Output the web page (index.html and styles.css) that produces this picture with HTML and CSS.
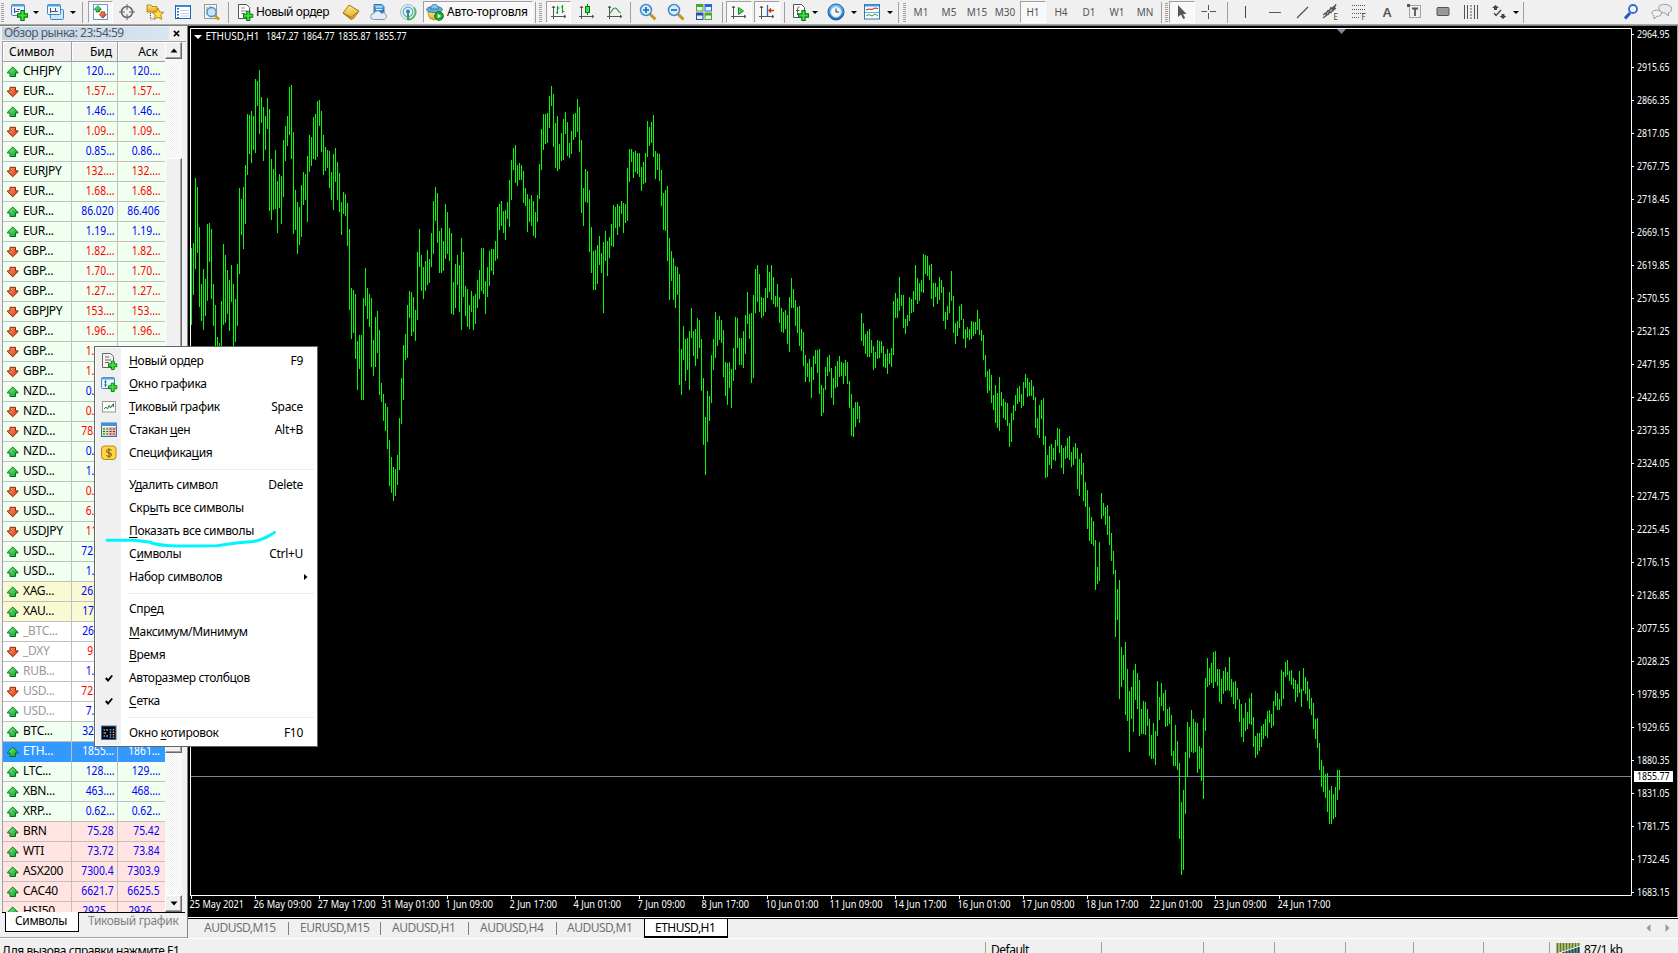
FILE: index.html
```html
<!DOCTYPE html>
<html lang="ru">
<head>
<meta charset="utf-8">
<title>ETHUSD,H1</title>
<link rel="stylesheet" href="styles.css">
</head>
<body>
<svg class="defs" aria-hidden="true">
  <defs>
    <linearGradient id="gUp" x1="0" y1="0" x2="1" y2="1"><stop offset="0" stop-color="#7df58a"/><stop offset="1" stop-color="#0a9a22"/></linearGradient>
    <linearGradient id="gDn" x1="0" y1="0" x2="1" y2="1"><stop offset="0" stop-color="#ffa070"/><stop offset="1" stop-color="#d83008"/></linearGradient>
    <linearGradient id="gGold" x1="0" y1="0" x2="0" y2="1"><stop offset="0" stop-color="#ffe98a"/><stop offset="1" stop-color="#e0a417"/></linearGradient>
    <linearGradient id="gBlue" x1="0" y1="0" x2="0" y2="1"><stop offset="0" stop-color="#7cc4f4"/><stop offset="1" stop-color="#1b62b4"/></linearGradient>
    <symbol id="up" viewBox="0 0 12 12"><path d="M5.700 1 11 6.300V7H8.500v3.500H3V7H.5V6.300z" fill="url(#gUp)" stroke="#0b6e1a"/></symbol>
    <symbol id="dn" viewBox="0 0 12 12"><path d="M5.700 10.800.5 5.500V4.800H3V1.300h5.500v3.500H11v.7z" fill="url(#gDn)" stroke="#8f2408"/></symbol>
    <symbol id="plus" viewBox="0 0 10 10"><path d="M3.500.5h3v3h3v3h-3v3h-3v-3h-3v-3h3z" fill="#3fe03f" stroke="#067a12"/></symbol>
    <symbol id="axes" viewBox="0 0 18 18"><path d="M3.500 3v13M1 13.500h15M2 5l1.500-2L5 5M14 12l2 1.500-2 1.500" fill="none" stroke="#555"/></symbol>
  </defs>
</svg>

<header class="toolbar">
  <i class="grip"></i>
  <span class="btn w23"><svg class="ic" viewBox="0 0 18 18"><rect x="1.500" y="1.500" width="13" height="11" rx="1" fill="#eef6fd" stroke="#3d86c6"/><path d="M2 2.500h12" stroke="#5aa0dc" stroke-width="2"/><path d="M4.500 5v5M4 8.500h5M7 6.500h3" stroke="#557"/><use href="#plus" x="7" y="7" width="11" height="11"/></svg></span>
  <span class="btn w11"><i class="caret"></i></span>
  <span class="btn"><svg class="ic" viewBox="0 0 18 18"><rect x="4.500" y="6.500" width="13" height="10" rx="1" fill="#cfe6fa" stroke="#3d86c6"/><rect x="1.500" y="1.500" width="13" height="10" rx="1" fill="#eef6fd" stroke="#3d86c6"/><path d="M2 2.500h12" stroke="#5aa0dc" stroke-width="2"/><path d="M4.500 5v5M4 8.500h8M9.500 5v4" stroke="#557"/></svg></span>
  <span class="btn w8"><i class="caret"></i></span>
  <i class="sep w11"></i>
  <span class="btn w25 on"><svg class="ic" viewBox="0 0 18 18"><rect x="1.500" y="1.500" width="14" height="15" fill="#fff" stroke="#5e9fdb"/><use href="#up" x="2" y="2" width="8" height="8"/><use href="#dn" x="7" y="8" width="8" height="8"/></svg></span>
  <span class="btn"><svg class="ic" viewBox="0 0 18 18"><g fill="none" stroke="#666"><circle cx="9" cy="9" r="5.500" stroke-width="1.500"/><path d="M9 1v6M9 11v6M1 9h6M11 9h6"/></g></svg></span>
  <span class="btn"><svg class="ic" viewBox="0 0 18 18"><path d="M1 2h4l1 1.500h5V9H1z" fill="url(#gGold)" stroke="#b98c1c"/><path d="M4.500 10v6h4" fill="none" stroke="#444" stroke-dasharray="1 1"/><path d="m12 5 1.700 4 4.100.3-3.100 2.800 1 4.300L12 14.200l-3.700 2.200 1-4.300-3.100-2.800 4.100-.3z" fill="#ffd94a" stroke="#b98c1c"/></svg></span>
  <span class="btn"><svg class="ic" viewBox="0 0 18 18"><rect x="1.500" y="2.500" width="15" height="13" fill="#fff" stroke="#1f66b0"/><path d="M2 3h14" stroke="#3a87d0" stroke-width="2"/><path d="M4 5v10" stroke="#2b6fbd" stroke-width="2" stroke-dasharray="1.500 1.500"/><path d="M7 7.500h8M7 10.500h8M7 13h8" stroke="#b8cde4"/></svg></span>
  <span class="btn"><svg class="ic" viewBox="0 0 18 18"><rect x="2.500" y="1.500" width="12" height="14" fill="#f4f4f0" stroke="#9a9a90"/><path d="M5 4v8M8 3v5M11 4v3" stroke="#999"/><circle cx="9.500" cy="9" r="4.500" fill="#bfe0f8" fill-opacity=".85" stroke="#4b8fc8" stroke-width="1.300"/><path d="m13 12.500 4 4" stroke="#c8961d" stroke-width="2.500"/></svg></span>
  <i class="sep w7"></i>
  <span class="btn wide w104"><svg class="ic" viewBox="0 0 18 18"><path d="M2.500 1.500h8l3 3v11h-11z" fill="#fff" stroke="#555"/><path d="M5 5h4M5 8h6M5 10.500h4" stroke="#888"/><use href="#plus" x="7" y="7.500" width="10.500" height="10.500"/></svg><b class="t-order">Новый ордер</b></span>
  <span class="btn"><svg class="ic" viewBox="0 0 18 18"><path d="M1 10 7 2l10 6-5 7-3 1.500z" fill="url(#gGold)" stroke="#a87412"/><path d="M1 10 9 14.500l8-6.500" fill="none" stroke="#a87412"/></svg></span>
  <span class="btn"><svg class="ic" viewBox="0 0 18 18"><path d="M4 1.500h8l2 2V10H4z" fill="url(#gBlue)" stroke="#2f79c0"/><path d="M6 4h6M6 6.500h6" stroke="#e5f3ff"/><path d="M3.500 16.500a3 3 0 0 1 .3-6 4 4 0 0 1 7.400-.3 3.200 3.200 0 0 1 3.300 6.300z" fill="#e6ecf6" stroke="#7f96ba"/></svg></span>
  <span class="btn w30"><svg class="ic" viewBox="0 0 18 18"><circle cx="9" cy="9" r="7.500" fill="#dff0ee" stroke="#9cc4c8"/><circle cx="9" cy="9" r="4.800" fill="none" stroke="#6b9fd0" stroke-width="1.200"/><path d="M9 16.500A7.500 7.500 0 0 0 15 4.500" fill="none" stroke="#5cb46a" stroke-width="2"/><circle cx="9" cy="8.500" r="2" fill="#3579c4"/><path d="M9 10v7" stroke="#37a045" stroke-width="2"/></svg></span>
  <span class="btn wide on w110 auto"><svg class="ic" viewBox="0 0 18 18"><path d="M2 9h12l-1.500 6L8 17l-4.500-2z" fill="url(#gGold)" stroke="#c29322"/><ellipse cx="8.500" cy="6.500" rx="8" ry="3" fill="#66aede" stroke="#3878aa"/><path d="M4.500 6C4.500 0 12.500 0 12.500 6z" fill="#8cc8ee" stroke="#3878aa"/><circle cx="13" cy="13" r="4.300" fill="#1ea82c" stroke="#0b7418"/><path d="m11.700 10.700 3.500 2.300-3.500 2.300z" fill="#fff"/></svg><b class="t-auto">Авто-торговля</b></span>
  <i class="sep w5"></i>
  <i class="grip w8"></i>
  <span class="btn w25 on"><svg class="ic" viewBox="0 0 18 18"><use href="#axes"/><path d="M7.500 3v8M6 9.500h1.500M7.500 5h2M12.500 2v8M11 4h1.500M12.500 8.500h2" stroke="#169a26" stroke-width="1.200"/></svg></span>
  <span class="btn w32"><svg class="ic" viewBox="0 0 18 18"><use href="#axes"/><path d="M9.500 1v11" stroke="#087a16"/><rect x="7.500" y="3.500" width="4" height="6" fill="#3fe04a" stroke="#087a16"/></svg></span>
  <span class="btn w24"><svg class="ic" viewBox="0 0 18 18"><use href="#axes"/><path d="M3 11c3-1 3-6 6-6s2 4 6 5" fill="none" stroke="#2e9a3c" stroke-width="1.200"/></svg></span>
  <i class="sep w7"></i>
  <span class="btn"><svg class="ic" viewBox="0 0 18 18"><path d="m11 11 5.500 5.500" stroke="#c8961d" stroke-width="3"/><circle cx="7" cy="7" r="5.500" fill="#d5edfc" stroke="#3d8cc8" stroke-width="1.500"/><path d="M4 7h6M7 4v6" stroke="#1c68a8" stroke-width="1.600"/></svg></span>
  <span class="btn"><svg class="ic" viewBox="0 0 18 18"><path d="m11 11 5.500 5.500" stroke="#c8961d" stroke-width="3"/><circle cx="7" cy="7" r="5.500" fill="#d5edfc" stroke="#3d8cc8" stroke-width="1.500"/><path d="M4 7h6" stroke="#1c68a8" stroke-width="1.600"/></svg></span>
  <span class="btn"><svg class="ic" viewBox="0 0 18 18"><path d="M1 1h7.500v7.500H1zM9.500 9.500H17V17H9.500z" fill="#4aa81c"/><path d="M9.500 1H17v7.500H9.500z" fill="#2866d8"/><path d="M1 9.500h7.500V17H1z" fill="#2450a8"/><path d="M2 4h5.500v3.500H2zM10.500 4H16v3.500h-5.500zM2 12.500h5.500V16H2zM10.500 12.500H16V16h-5.500z" fill="#e8f2ff"/></svg></span>
  <i class="sep w8"></i>
  <span class="btn w26 on"><svg class="ic" viewBox="0 0 18 18"><use href="#axes"/><path d="M8.500 4.500v7l5-3.500z" fill="#4cd857" stroke="#0f8a1e"/></svg></span>
  <span class="btn w26 on ml2"><svg class="ic" viewBox="0 0 18 18"><use href="#axes"/><path d="M9.500 2v11" stroke="#2b6ab0" stroke-width="1.300"/><path d="M16 7.500h-5M13 5.500l-2 2 2 2" fill="none" stroke="#c03a10" stroke-width="1.400"/></svg></span>
  <i class="sep w8"></i>
  <span class="btn w23"><svg class="ic" viewBox="0 0 18 18"><path d="M2.500 1.500h8l3 3v10h-11z" fill="#fff" stroke="#555"/><path d="M8.500 4C6.500 3.500 6.500 5 6.500 12M5 7.500h3.500" fill="none" stroke="#555"/><use href="#plus" x="7" y="7" width="11" height="11"/></svg></span>
  <span class="btn w8"><i class="caret"></i></span>
  <span class="btn ml3"><svg class="ic" viewBox="0 0 18 18"><circle cx="9" cy="9" r="8" fill="url(#gBlue)" stroke="#1b5ca4"/><circle cx="9" cy="9" r="5.300" fill="#eef6ff" stroke="#b8d4ee"/><path d="M9 5.500V9h3" fill="none" stroke="#333"/></svg></span>
  <span class="btn w8"><i class="caret"></i></span>
  <span class="btn"><svg class="ic" viewBox="0 0 18 18"><rect x="1.500" y="1.500" width="15" height="14.500" fill="#fff" stroke="#2d78bc"/><path d="M2 2.500h14" stroke="#4a98dc" stroke-width="2"/><path d="M2 9.500h14" stroke="#79a9d4"/><path d="m3 7 3-1 3 .5 3-1.500 3 .5" fill="none" stroke="#9a2a14"/><path d="m3 13 3-1.500 3 1.500 3-2 3 2" fill="none" stroke="#2e9a3c"/></svg></span>
  <span class="btn w8"><i class="caret"></i></span>
  <i class="sep w8"></i>
  <i class="grip w5"></i>
  <span class="btn tf">M1</span><span class="btn tf">M5</span><span class="btn tf">M15</span><span class="btn tf">M30</span><span class="btn tf on">H1</span><span class="btn tf">H4</span><span class="btn tf">D1</span><span class="btn tf">W1</span><span class="btn tf">MN</span>
  <i class="sep w5"></i>
  <i class="grip w5"></i>
  <span class="btn w26 on"><svg class="ic" viewBox="0 0 18 18"><path d="M5 2v12l3-2.500 2.200 4.500 2-1L10 11h3.500z" fill="#555"/></svg></span>
  <span class="btn"><svg class="ic" viewBox="0 0 18 18"><path d="M8.500 2v5M8.500 10v6M1.500 8.500H7M10 8.500h6" stroke="#555"/></svg></span>
  <i class="sep w8"></i>
  <span class="btn w30"><svg class="ic" viewBox="0 0 18 18"><path d="M8.500 3v12" stroke="#444"/></svg></span>
  <span class="btn"><svg class="ic" viewBox="0 0 18 18"><path d="M3 9.500h12" stroke="#555"/></svg></span>
  <span class="btn"><svg class="ic" viewBox="0 0 18 18"><path d="M3 15 14 4" stroke="#555" stroke-width="1.200"/></svg></span>
  <span class="btn"><svg class="ic tool" viewBox="0 0 18 18"><path d="M1 12 14 2M1 15 14 5M3 14 6 7M6 12 9 4M9 10l3-7M11 8l3-7" stroke="#555" stroke-width="1.200"/><text x="11.500" y="17">E</text></svg></span>
  <span class="btn"><svg class="ic tool" viewBox="0 0 18 18"><path d="M2 2.500h13M2 6.500h13M2 10.500h13M2 14.500h8" stroke="#555" stroke-dasharray="1 1"/><text x="11.500" y="17">F</text></svg></span>
  <span class="btn glyph">A</span>
  <span class="btn"><svg class="ic tool" viewBox="0 0 18 18"><rect x="3.500" y="2.500" width="11" height="12" fill="none" stroke="#555" stroke-dasharray="1 1"/><path d="M1 1h3v3H1z" fill="#555"/><path d="M6 5.500h6M9 5v8" stroke="#555" stroke-width="1.800"/></svg></span>
  <span class="btn"><svg class="ic" viewBox="0 0 18 18"><rect x="3" y="4.500" width="12" height="8" rx="1" fill="#999" stroke="#555"/></svg></span>
  <span class="btn"><svg class="ic" viewBox="0 0 18 18"><path d="M2.500 2v14M5.500 2v14M12.500 2v14M15.500 2v14" stroke="#555"/><path d="M9 2v14" stroke="#555" stroke-dasharray="2 1"/></svg></span>
  <span class="btn"><svg class="ic" viewBox="0 0 18 18"><path d="m5.500 2 3.500 3H7v2H4V5H2zM13 16l-3.500-3h2v-2h3v2h2z" fill="#444"/><path d="m4 10 2 2.500 5-5.500" fill="none" stroke="#444" stroke-width="1.300"/></svg></span>
  <span class="btn w5"><i class="caret"></i></span>
  <i class="sep w11"></i>
  <span class="fill"></span>
  <span class="btn w30"><svg class="ic" viewBox="0 0 18 18"><path d="m3 15.500 5-5.500" stroke="#1f56c8" stroke-width="3"/><circle cx="11" cy="6" r="4" fill="#f2f7ff" stroke="#2f69d8" stroke-width="1.800"/></svg></span>
  <span class="btn w32"><svg class="chat" viewBox="0 0 22 18"><path d="M8 3.500C9 .5 20.500.5 20.500 5.500c0 3-1.500 4-3 4.300L17.500 13l-3.500-3C9 10 7.500 7 8 3.500z" fill="#e9e9ef" stroke="#999"/><path d="M1 10c0-3.800 9.500-3.800 9.500 0 0 2.700-2.500 3.300-4.500 3.300L3 16v-3.500C1.700 12 1 11 1 10z" fill="#f3f3f7" stroke="#999"/></svg></span>
</header>

<main class="work">
  <aside class="watch">
    <div class="caption"><span class="caption-text"><em>Обзор рынка: 23:54:59</em></span><svg class="close" viewBox="0 0 8 8"><path d="m1 1 6 6M7 1 1 7" stroke="#000" stroke-width="1.700"/></svg></div>
    <div class="grid">
      <div class="table">
        <div class="row head"><span class="c-sym">Символ</span><span class="c-num">Бид</span><span class="c-num">Аск</span></div>
        <div class="rows" id="rows"></div>
      </div>
      <div class="scroll">
        <i class="sb"><svg viewBox="0 0 8 5"><path d="M4 .5 7.500 4.500H.5z"/></svg></i>
        <i class="track"></i><i class="thumb"></i><i class="track low"></i>
        <i class="sb"><svg viewBox="0 0 8 5"><path d="M4 4.500.5.5h7z"/></svg></i>
      </div>
    </div>
    <div class="ptabs"><span class="ptab active"><em>Символы</em></span><span class="ptab"><em>Тиковый график</em></span></div>
  </aside>

  <section class="mdi">
    <svg class="chart" id="chart" width="1490" height="891" viewBox="188 26 1490 891"></svg>
    <nav class="tabs">
      <span class="tab t1">AUDUSD,M15</span><span class="tab t2">EURUSD,M15</span><span class="tab t3">AUDUSD,H1</span><span class="tab t4">AUDUSD,H4</span><span class="tab t5">AUDUSD,M1</span><span class="tab active">ETHUSD,H1</span>
      <span class="fill"></span>
      <svg class="nav" viewBox="0 0 24 8"><path d="M4.500 0v8L.5 4zM19.500 0v8l4-4z" fill="#999"/></svg>
    </nav>
  </section>
</main>

<footer class="status">
  <span class="s-help"><em>Для вызова справки нажмите F1</em></span><span class="s-cell s1"><em>Default</em></span><span class="s-cell s2"></span><span class="s-cell s3"></span><span class="s-cell s3"></span><span class="s-cell s4"></span><span class="s-cell s5"></span><span class="s-cell s6"></span>
  <span class="s-cell s7"><svg class="traffic" viewBox="0 0 24 14"><path d="M1.500 0v14M4.500 0v14M7.500 0v14M10.500 0v14M13.500 0v14M16.500 0v14M19.500 0v14M22.500 0v14" stroke="#5c7a10" stroke-width="2"/><path d="M1.500 11v3M4.500 10v4M7.500 9v5M10.500 8v6M13.500 7v7M16.500 6v8M19.500 5v9M22.500 4v10" stroke="#0c4a70" stroke-width="2"/><path d="M0 11 24 3" stroke="#f0f0f0" stroke-width="1"/></svg><em>87/1 kb</em></span>
</footer>

<div class="menu">
  <div class="mi"><i class="mic"><svg class="ic" viewBox="0 0 18 18"><path d="M2.500 1.500h8l3 3v11h-11z" fill="#f4f4f4" stroke="#666"/><path d="M5 5h4M5 8h6M5 10.500h4" stroke="#666"/><use href="#plus" x="8" y="8.500" width="9.500" height="9.500"/></svg></i><em><u>Н</u>овый ордер</em><kbd>F9</kbd></div>
  <div class="mi"><i class="mic"><svg class="ic" viewBox="0 0 18 18"><rect x="1.500" y="2.500" width="13" height="11" rx="1" fill="#eef6fd" stroke="#3d86c6"/><path d="M2 3.500h12" stroke="#5aa0dc" stroke-width="2"/><path d="M5.500 5v7M4 7h3M4 10h3" stroke="#47a"/><use href="#plus" x="8" y="7.500" width="9.500" height="9.500"/></svg></i><em><u>О</u>кно графика</em></div>
  <div class="mi"><i class="mic"><svg class="ic" viewBox="0 0 18 18"><rect x="2.500" y="3.500" width="13" height="10.500" fill="#fff" stroke="#999"/><path d="m4 11 2-2 1.500 2L9 7.500l1.500 2.500 2-3.500L13.500 9V5.500" fill="none" stroke="#1a8030"/></svg></i><em><u>Т</u>иковый график</em><kbd>Space</kbd></div>
  <div class="mi"><i class="mic"><svg class="ic" viewBox="0 0 18 18"><rect x="1.500" y="2" width="15" height="13.500" fill="#fff" stroke="#2f74ba"/><path d="M1 3.500h16" stroke="#4a90d8" stroke-width="3"/><path d="M2 6h7v9H2z" fill="#d2efb0"/><path d="M9 6h7v9H9z" fill="#f5b4a8"/><path d="M3 8h12M3 10.500h12M3 13h12" stroke="#445" stroke-dasharray="2 1.300"/></svg></i><em>Стакан <u>ц</u>ен</em><kbd>Alt+B</kbd></div>
  <div class="mi"><i class="mic"><svg class="ic" viewBox="0 0 18 18"><rect x="1.500" y="2" width="14.500" height="13.500" rx="3" fill="#fbd54a" stroke="#b88a14"/><path d="M11.500 6.500C10.500 5 6.500 5 6.500 7.200c0 2 5 1.300 5 3.600 0 2.200-4 2.200-5.200.5M9 4v10" fill="none" stroke="#8a6408" stroke-width="1.100"/></svg></i><em>Специфика<u>ц</u>ия</em></div>
  <hr>
  <div class="mi"><i class="mic"></i><em>У<u>д</u>алить символ</em><kbd>Delete</kbd></div>
  <div class="mi"><i class="mic"></i><em>Скр<u>ы</u>ть все символы</em></div>
  <div class="mi"><i class="mic"></i><em><u>П</u>оказать все символы</em></div>
  <div class="mi"><i class="mic"></i><em>С<u>и</u>мволы</em><kbd>Ctrl+U</kbd></div>
  <div class="mi"><i class="mic"></i><em>Набор символов</em><svg class="sub" viewBox="0 0 4 6"><path d="M0 0v6l3.500-3z"/></svg></div>
  <hr>
  <div class="mi"><i class="mic"></i><em>Спр<u>е</u>д</em></div>
  <div class="mi"><i class="mic"></i><em><u>М</u>аксимум/Минимум</em></div>
  <div class="mi"><i class="mic"></i><em><u>В</u>ремя</em></div>
  <div class="mi"><i class="mic"><svg class="ck" viewBox="0 0 8 8"><path d="m.8 4 2.200 2.500L7.200 1.500" fill="none" stroke="#000" stroke-width="1.900"/></svg></i><em>Авто<u>р</u>азмер столбцов</em></div>
  <div class="mi"><i class="mic"><svg class="ck" viewBox="0 0 8 8"><path d="m.8 4 2.200 2.500L7.200 1.500" fill="none" stroke="#000" stroke-width="1.900"/></svg></i><em><u>С</u>етка</em></div>
  <hr>
  <div class="mi"><i class="mic"><svg class="ic" viewBox="0 0 18 18"><rect x="1.500" y="2" width="14.500" height="13.500" fill="#05060c" stroke="#2f74ba"/><path d="M3.500 6h1.500M6 6h2M3.500 9h2.500M3.500 12h1.500M6 12h2" stroke="#ddd"/><path d="M10.500 5v9" stroke="#6a9af0" stroke-width="1.500" stroke-dasharray="1.500 1"/><path d="M13.500 5v9" stroke="#f08a7a" stroke-width="1.500" stroke-dasharray="1.500 1"/></svg></i><em>Окно <u>к</u>отировок</em><kbd>F10</kbd></div>
</div>
<svg class="marker" viewBox="104 525 174 26"><path d="M107 540.300 134 540.300 149 542C156 545 162 545.500 176 546L217 545.700 236 543 253 541.500C262 540.500 267 537 274.500 532.500" fill="none" stroke="#00f6ff" stroke-width="3" stroke-linecap="round" stroke-linejoin="round"/></svg>
<script src="app.js"></script>
</body>
</html>
```
FILE: styles.css
```css
* { box-sizing: border-box; }
html, body { margin: 0; height: 953px; overflow: hidden; }
body {
  display: flex; flex-direction: column; width: 1678px;
  background: #f0f0f0; color: #000;
  font: 12px/14px "Noto Sans", "Open Sans", sans-serif;
}
em, i, b { font-style: normal; font-weight: normal; }
em, b, .tf, kbd { white-space: nowrap; }
.defs { position: absolute; width: 0; height: 0; }
.fill { flex: 1; }

/* toolbar */
.toolbar { display: flex; align-items: center; flex: none; height: 26px; padding-bottom: 1px; border-bottom: 1px solid #808080; box-shadow: inset 0 -1px 0 #a8a8a8; }
.btn { display: flex; align-items: center; justify-content: center; flex: none; width: 28px; height: 22px; }
.on { border: 1px solid; border-color: #a0a0a0 #fff #fff #a0a0a0; background: #f8f8f8; }
.grip { flex: none; width: 7px; height: 19px; background: repeating-linear-gradient(#a0a0a0 0 1px, #f0f0f0 1px 2px) 1px 0 / 3px 100% no-repeat; }
.sep { flex: none; height: 21px; background: linear-gradient(#a0a0a0, #a0a0a0) 50% 0 / 1px 100% no-repeat; }
.w5 { width: 5px; } .w7 { width: 7px; } .w8 { width: 8px; } .w11 { width: 11px; }
.w23 { width: 23px; } .w24 { width: 24px; } .w25 { width: 25px; } .w26 { width: 26px; } .w30 { width: 30px; } .w32 { width: 32px; }
.w104 { width: 105px; } .w110 { width: 110px; }
.ml2 { margin-left: 2px; } .ml3 { margin-left: 3px; }
.wide { justify-content: flex-start; padding-left: 4px; }
.auto { padding-left: 2px; }
.ic { display: block; flex: none; width: 18px; height: 18px; }
.chat { width: 22px; height: 18px; }
.caret { flex: none; width: 0; height: 0; border: 3px solid transparent; border-top: 3px solid #000; border-bottom: 0; }
.t-order { margin-left: 2px; letter-spacing: -.45px; }
.t-auto { margin-left: 3px; letter-spacing: -.2px; }
.tf { color: #555; font-size: 10px; }
.tf.on { width: 26px; margin: 0 1px; }
.tool { overflow: visible; }
.tool text { font: 8px "Noto Sans", sans-serif; fill: #444; }
.glyph { color: #555; font-weight: 600; font-size: 13px; }

/* market watch */
.work { display: flex; flex: none; height: 912px; }
.watch { display: flex; flex-direction: column; flex: none; width: 188px; height: 912px; padding: 1px 0 0 2px; border-right: 1px solid #808080; border-bottom: 1px solid #a0a0a0; }
.caption { display: flex; align-items: center; flex: none; height: 13px; }
.caption-text { width: 167px; height: 13px; padding-left: 2px; background: linear-gradient(90deg, #c3d3e2, #d8e5f3); color: #4c5864; line-height: 12px; }
.caption-text em { letter-spacing: -.5px; }
.close { width: 7px; height: 7px; margin-left: 4px; }
.grid { display: flex; flex: none; height: 871px; margin-top: 1px; width: 184px; border-top: 1px solid #a0a0a0; }
.table { width: 163px; border-left: 1px solid #a0a0a0; overflow: hidden; }
.row { display: grid; grid-template-columns: 69px 46px 47px; height: 20px; }
.row > span { display: flex; align-items: center; overflow: hidden; border-bottom: 1px solid #c0c0c0; border-right: 1px solid #c0c0c0; }
.rows .row > span { padding-bottom: 2px; }
.row > span:last-child { border-right: 0; padding-right: 5px; }
.head > span { border-color: #a0a0a0; box-shadow: inset 1px 1px 0 #fff; }
.head .c-sym { padding-left: 6px; }
.c-num { justify-content: flex-end; padding-right: 3px; }
.head .c-num { padding-right: 5px; }
.row.head > span:last-child { padding-right: 7px; }
.rows { height: 851px; overflow: hidden; }
.c-sym .ar { flex: none; width: 12px; height: 12px; margin: 2px 4px 0 4px; }
.rows .c-sym em { letter-spacing: -.3px; }
.rows .c-num em { transform: scaleX(.86); transform-origin: right; }
.up .c-num { color: #00f; } .down .c-num { color: #f00; }
.mint { background: #f0fff0; } .gold { background: #fafad2; } .pink { background: #ffe4e1; } .plain { background: #fff; }
.plain .c-sym { color: #999; }
.sel { background: #3399ff; color: #fff; }
.rows .sel > span { border-bottom-color: #3399ff; }
.sel .c-num { color: #fff; }
.scroll { display: flex; flex-direction: column; width: 17px; height: 870px; }
.sb, .thumb { display: flex; align-items: center; justify-content: center; flex: none; border: 1px solid; border-color: #fff #696969 #696969 #fff; box-shadow: inset -1px -1px 0 #a0a0a0; background: #f0f0f0; }
.sb { height: 17px; }
.sb svg { width: 8px; height: 5px; }
.thumb { height: 595px; }
.track { flex: none; height: 99px; background: repeating-conic-gradient(#fff 0 25%, #f0f0f0 0 50%) 0 0 / 2px 2px; }
.track.low { flex: 1; height: auto; }
.ptabs { display: flex; flex: none; height: 20px; width: 183px; border-top: 1px solid #000; }
.ptab { height: 19px; padding: 1px 0 0 7px; color: #808080; }
.ptab em { letter-spacing: -.35px; }
.ptab.active { width: 74px; height: 20px; margin: -1px 2px 0 3px; padding: 2px 0 0 9px; border: 1px solid #000; border-top: 0; background: #fff; color: #000; }

/* chart */
.mdi { display: flex; flex-direction: column; flex: 1; height: 912px; }
.chart { display: block; flex: none; background: #000; }
.frame { fill: none; stroke: #fff; }
.bar { stroke: #00ff00; shape-rendering: crispEdges; }
.bid { stroke: #778899; shape-rendering: crispEdges; }
.chart text { font: 10px "Noto Sans", sans-serif; fill: #fff; }
.chart .dark { fill: #000; }
.tabs { display: flex; flex: none; height: 21px; padding: 0; border-top: 1px solid #fff; box-shadow: inset 0 1px 0 #000; }
.tab { display: flex; align-items: center; flex: none; height: 19px; padding-bottom: 2px; color: #707070; letter-spacing: -.5px; background: linear-gradient(#808080, #808080) 100% 50% / 1px 13px no-repeat; }
.t1 { width: 101px; padding-left: 16px; } .t2 { width: 92px; padding-left: 11px; } .t3 { width: 88px; padding-left: 11px; } .t4 { width: 88px; padding-left: 11px; } .t5 { width: 87px; padding-left: 10px; background: none; }
.tab { margin-top: 1px; }
.tab.active { width: 84px; height: 19px; padding: 0 0 0 10px; border: 1px solid #000; border-top: 0; border-bottom-width: 2px; background: #fff; color: #000; }
.nav { width: 24px; height: 8px; margin: 6px 8px 0 0; }

/* status bar */
.status { display: flex; flex: none; height: 15px; border-top: 1px solid #fff; overflow: hidden; }
.s-help { width: 985px; padding: 5px 0 0 2px; }
.s-help em { letter-spacing: -.45px; }
.s-cell { display: flex; flex: none; height: 20px; margin-top: 3px; border-left: 1px solid #a0a0a0; }
.s1 { width: 116px; padding: 1px 0 0 5px; } .s2 { width: 102px; } .s3 { width: 71px; } .s4 { width: 68px; } .s5 { width: 70px; } .s6 { width: 66px; } .s7 { width: 128px; padding: 1px 0 0 6px; }
.s1 em, .s7 em { letter-spacing: -.5px; }
.traffic { width: 24px; height: 14px; margin-right: 4px; }

/* context menu */
.menu { position: absolute; left: 94px; top: 346px; width: 224px; height: 401px; padding: 3px 2px; border: 1px solid #646464; background: linear-gradient(#f0f0f0, #f0f0f0) 1px 1px / 25px 397px no-repeat #fff; }
.mi { display: flex; align-items: center; height: 23px; padding: 0 12px 2px 0; }
.mic { display: flex; align-items: center; justify-content: center; flex: none; width: 24px; margin-right: 8px; }
.mi em { letter-spacing: -.32px; }
.mi u { text-underline-offset: 2px; }
.mi kbd { margin-left: auto; font: inherit; letter-spacing: -.3px; }
.menu hr { height: 1px; margin: 4px 1px 4px 32px; border: 0; background: #ececec; }
.ck { width: 8px; height: 8px; }
.sub { width: 4px; height: 6px; margin-left: auto; margin-right: -5px; }
.marker { position: absolute; left: 104px; top: 525px; width: 174px; height: 26px; }
```
FILE: app.js
```js
// Market watch rows: symbol, bid, ask, direction, tint
const quotes = `CHFJPY|120....|120....|u|mint
EUR...|1.57...|1.57...|d|mint
EUR...|1.46...|1.46...|u|mint
EUR...|1.09...|1.09...|d|mint
EUR...|0.85...|0.86...|u|mint
EURJPY|132....|132....|d|mint
EUR...|1.68...|1.68...|d|mint
EUR...|86.020|86.406|u|mint
EUR...|1.19...|1.19...|u|mint
GBP...|1.82...|1.82...|d|mint
GBP...|1.70...|1.70...|d|mint
GBP...|1.27...|1.27...|d|mint
GBPJPY|153....|153....|d|mint
GBP...|1.96...|1.96...|d|mint
GBP...|1.38...||d|mint
GBP...|1.27...||d|mint
NZD...|0.89...||u|mint
NZD...|0.64...||d|mint
NZD...|78.321||d|mint
NZD...|0.70...||u|mint
USD...|1.23...||u|mint
USD...|0.91...||d|mint
USD...|6.45...||d|mint
USDJPY|110....||d|mint
USD...|72.150||u|mint
USD...|1.34...||u|mint
XAG...|26.080||u|gold
XAU...|1781...||u|gold
_BTC...|2608...||u|plain
_DXY|91.80||d|plain
RUB...|1.38...||u|plain
USD...|72.150||d|plain
USD...|7.76...||u|plain
BTC...|3215...||u|mint
ETH...|1855...|1861...|u|sel
LTC...|128....|129....|u|mint
XBN...|463....|468....|u|mint
XRP...|0.62...|0.62...|u|mint
BRN|75.28|75.42|u|pink
WTI|73.72|73.84|u|pink
ASX200|7300.4|7303.9|u|pink
CAC40|6621.7|6625.5|u|pink
HSI50|2925...|2926...|u|pink`;
document.getElementById('rows').innerHTML = quotes.split('\n').map(line => {
  const [sym, bid, ask, dir, tint] = line.split('|');
  const up = dir === 'u';
  return `<div class="row ${tint} ${up ? 'up' : 'down'}"><span class="c-sym"><svg class="ar"><use href="#${up ? 'up' : 'dn'}"/></svg><em>${sym}</em></span><span class="c-num"><em>${bid}</em></span><span class="c-num"><em>${ask}</em></span></div>`;
}).join('');

// High-low bars, two pixels apart. Each run has its own origin; y values are thirds of a pixel.
const runs = [
[191, 50, `594-825 579-735 384-657 411-609 531-771 702-813 657-840 687-798 522-753 519-636 537-747 702-828 765-900 860-930 880-930 753-900 582-825 615-819 660-792 690-843
645-756 702-900 747-876 642-828 414-672 447-555 411-597 345-522 192-375 195-312 183-339 198-300 87-309 93-168 60-252 141-219 171-333 198-300 144-237 177-483
327-510 357-480 300-477 393-549 372-474 378-522 270-441 228-333 198-288 111-255 105-327 246-552 420-540 456-612 471-585 405-561 366-465 372-450 318-516 255-366
261-348 201-327 192-330 153-321 150-228 183-306 255-375 291-363 300-354 303-414 366-450 312-480 294-396 336-450 369-486 456-555 426-492 432-498 459-588 537-780
714-867 720-849 732-927 873-1020 855-957 855-1050 744-1050 654-768 714-807 732-831 744-951 870-978 801-951 783-909 840-1035 999-1056 1032-1113 1059-1143 1071-1197 1170-1308
1221-1329 1251-1353 1257-1338 1215-1305 1104-1260 984-1122 885-1050 852-930 765-924 723-804 726-858 741-846 780-873 606-810 537-651 615-723 651-747 633-723 600-705 627-699
549-651 453-612 411-513 429-579 543-669 534-669 573-663 462-627 486-612 534-633 549-792 696-795 642-774 615-705 645-786 564-840 606-741 708-798 717-831 765-837`],
[471, 70, `663-726 678-780 672-762 630-714 600-687 534-663 534-672 633-732 591-681 543-648 537-603 537-615 513-573 411-567 402-480 393-468 423-489 420-510 396-447 330-471
270-390 234-300 225-339 285-348 279-330 285-330 303-399 354-408 372-486 387-456 375-468 393-498 426-504 375-456 282-387 177-300 132-240 132-222 129-219 78-174
48-108 72-231 159-294 138-303 222-297 189-273 147-270 126-192 156-258 219-264 183-252 132-210 129-201 87-186 111-246 210-429 354-468 297-396 303-399 360-546
471-609 543-660 540-660 525-642 498-585 549-609 516-729 483-573 513-618 501-564 462-528 405-531 411-474 402-495 408-471 393-432 399-489 402-459 294-453 237-336
237-276 246-324 243-306 249-312 249-321 291-363 276-342 249-339 153-261 171-228 156-219 135-261 243-327 249-300 252-333 300-408 369-480 360-483 348-573 504-690
543-633 564-690 588-714 591-675 612-945 837-975 768-870 807-933 804-900 783-960 714-804 783-858 777-888 744-867 750-834 807-963 924-1125 1041-1215 963-1116 978-1053
855-999 807-900 726-864 750-828 738-810 750-819 780-921 876-978 879-1005 876-954 897-1014 834-933 741-900 744-834 804-885 804-885 783-894 735-852 666-762 732-807
729-939 675-924 597-729 585-696 612-726`],
[761, 240, `171-234 174-228 144-216 75-174 96-156 75-180 111-192 168-201 132-201 171-249 204-276 216-279 210-267 225-312 171-336 114-204 147-204 180-258 201-279 198-318
267-333 276-378 345-426 369-411 357-426 381-474 348-420 330-372 330-399 327-462 435-528 444-519 381-450 351-408 345-396 384-474 414-495 378-444 363-441 348-411
366-408 369-432 360-408 366-432 423-504 462-588 504-591 486-561 486-537 498-549 219-303 249-318 282-342 273-351 267-351 300-339 318-390 336-384 300-357 303-354
303-339 318-381 342-384 327-402 339-372 324-381 183-345 159-234 174-234 111-213 165-198 165-264 237-282 225-258 171-243 177-219 153-216 75-180 114-192 129-183
120-156 42-159 45-102 48-108 75-120 72-177 129-201 129-171 141-192 111-180 120-159 141-243 216-267 198-240 156-219 93-183 168-279 249-312 243-288 198-264
192-240 237-297 267-324 261-294 267-300 243-297 246-288 246-282 210-270 237-285 270-303 285-360 345-411 393-459 387-453 405-489 465-510 435-549 459-564 411-573
456-498 477-534 486-540 489-558 549-621 519-606 495-540 465-513 444-492 438-486 462-504 426-498 402-444 414-471 426-468 420-468 438-480 471-564 534-585 495-594
480-537 474-615 588-714 645-711 618-675 612-687 624-660 600-663 564-618 567-639 615-684 624-702 618-657 594-654 588-660`],
[1071, 440, `36-81 21-75 9-57 24-147 57-168 39-105 69-183 126-201 150-267 201-303 231-312 243-318 300-450 381-432 306-423 159-237 189-228 201-255 195-285 228-315
279-363 333-402 390-591 447-540 420-777 621-741 645-720 606-825 687-843 753-936 741-837 690-876 672-780 699-807 720-888 807-882 783-882 786-885 807-858 837-948
885-957 849-957 873-975 723-888 771-840 729-798 759-813 750-861 807-858 801-852 825-948 933-978 855-978 903-990 969-1197 1086-1305 1050-1290 936-1122 846-1011 861-954
810-936 837-939 846-936 849-999 918-987 924-1023 834-1077 714-873 654-741 684-735 669-729 636-744 633-726 687-738 687-786 717-792 693-762 681-753 696-750 651-753
717-771 726-792 723-807 744-780 777-846 792-891 834-906 789-873 816-867 774-852 759-855 831-921 888-954 879-945 879-933 858-921 852-897 837-888 813-894 810-849
822-864 783-858 753-798 759-810 777-810 690-798 696-777 666-711 660-705 693-723 690-735 714-747 720-786 732-771 693-759 747-801 684-753 711-762 723-783 747-807
774-825 789-867 837-897 834-924 909-990 960-1041 978-1056 1002-1074 999-1116 1050-1152 1038-1152 1062-1137 1041-1131 990-1080 990-1050`]
];
let d = '';
runs.forEach(([x, y, list]) => list.split(/\s+/).forEach((pair, i) => {
  const [a, b] = pair.split('-').map(v => y + Math.round(v / 3));
  d += `M${x + 2 * i + .5} ${a}V${b}`;
}));

const fit = (x, y, w, s, cls = '') => `<text x="${x}" y="${y}" textLength="${w}" lengthAdjust="spacingAndGlyphs" class="${cls}">${s}</text>`;
let out = `<path class="bid" d="M191 776.5H1631"/><path class="bar" d="${d}"/><path class="frame" d="M190.5 895.5V28.5H1631.5V895.5H190"/>`;
out += '<path d="M194 35h8l-4 4z" fill="#fff"/><path d="M1337 29h9l-4.500 5z" fill="#778899"/>';
out += fit(205.5, 40, 54, 'ETHUSD,H1') + ['1847.27', '1864.77', '1835.87', '1855.77'].map((s, i) => fit(266 + 36 * i, 40, 32.5, s)).join('');
for (let i = 0; i < 27; i++) {
  const y = 34 + 33 * i;
  out += `<path class="frame" d="M1632 ${y + .5}h2"/>` + fit(1637, y + 4, 32.5, (2964.95 - 49.3 * i).toFixed(2));
}
out += '<path d="M1634 771h39v11h-39z" fill="#fff"/>' + fit(1637, 780, 32.5, '1855.77', 'dark');
[['25 May 2021', 54.5], ['26 May 09:00', 58], ['27 May 17:00', 58], ['31 May 01:00', 58], ['1 Jun 09:00', 47.5], ['2 Jun 17:00', 47.5], ['4 Jun 01:00', 47.5], ['7 Jun 09:00', 47.5], ['8 Jun 17:00', 47.5], ['10 Jun 01:00', 53], ['11 Jun 09:00', 53], ['14 Jun 17:00', 53], ['16 Jun 01:00', 53], ['17 Jun 09:00', 53], ['18 Jun 17:00', 53], ['22 Jun 01:00', 53], ['23 Jun 09:00', 53], ['24 Jun 17:00', 53]].forEach(([s, w], k) => {
  out += `<path class="frame" d="M${191.5 + 64 * k} 896v3"/>` + fit(189.5 + 64 * k, 908, w, s);
});
out += '<path d="M1677.500 26v891" stroke="#a0a0a0"/>';
document.getElementById('chart').innerHTML = out;
```
